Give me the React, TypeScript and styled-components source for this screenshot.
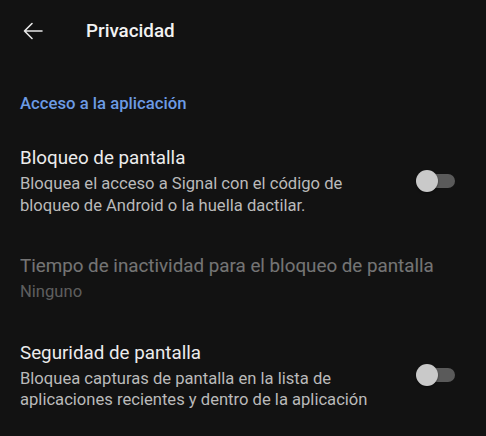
import React, { FunctionComponent } from "react";
import styled, { createGlobalStyle } from "styled-components";

const GlobalStyle = createGlobalStyle`
    body {
        margin: 0;
        background-color: #121212;
        font-family: Roboto, "Noto Sans", sans-serif;
    }
`;

const Screen = styled.div`
    width: 486px;
    height: 436px;
    background-color: #121212;
    overflow: hidden;
`;

const Toolbar = styled.div`
    display: flex;
    align-items: center;
    height: 62px;
    padding-left: 20px;
`;

const BackButton = styled.div`
    width: 26px;
    height: 26px;
    display: flex;
    align-items: center;
    justify-content: center;
    margin-right: 40px;
`;

const Title = styled.h1`
    margin: 0;
    font-size: 18.8px;
    font-weight: 500;
    color: #f2f2f2;
`;

const SectionHeader = styled.div`
    padding: 32px 20px 13px 20px;
    line-height: 20px;
    font-size: 16.7px;
    font-weight: 500;
    color: #6c9be4;
`;

const Row = styled.div<{ $disabled?: boolean }>`
    display: flex;
    align-items: center;
    justify-content: space-between;
    padding: 18px 32px 19px 20px;
    opacity: ${(p) => (p.$disabled ? 0.45 : 1)};
`;

const RowText = styled.div`
    display: flex;
    flex-direction: column;
    gap: 2px;
`;

const RowTitle = styled.div`
    font-size: 18.8px;
    line-height: 26px;
    color: #ececec;
`;

const RowSummary = styled.div`
    font-size: 16.6px;
    line-height: 21.5px;
    color: #bababa;
`;

const Switch = styled.div`
    position: relative;
    width: 36px;
    height: 22px;
    flex-shrink: 0;
`;

const Track = styled.div`
    position: absolute;
    left: 5px;
    top: 4px;
    width: 32px;
    height: 14px;
    border-radius: 7px;
    background-color: #5a5a5a;
`;

const Thumb = styled.div`
    position: absolute;
    left: -2px;
    top: 0;
    width: 22px;
    height: 22px;
    border-radius: 50%;
    background-color: #c9c9c9;
    box-shadow: 0 1px 2px rgba(0, 0, 0, 0.5);
`;

const BackArrow = () => (
    <svg width="24" height="24" viewBox="0 0 24 24" fill="none">
        <path
            d="M21 12H3.5M11 4.5L3.5 12L11 19.5"
            stroke="#e8e8e8"
            strokeWidth="1.6"
            strokeLinecap="round"
            strokeLinejoin="round"
        />
    </svg>
);

const Toggle = () => (
    <Switch>
        <Track />
        <Thumb />
    </Switch>
);

interface SettingProps {
    title: string;
    summary: string;
    toggle?: boolean;
    disabled?: boolean;
}

const Setting: FunctionComponent<SettingProps> = (props) => {
    return (
        <Row $disabled={props.disabled}>
            <RowText>
                <RowTitle>{props.title}</RowTitle>
                <RowSummary>
                    {props.summary.split("\n").map((line, i) => (
                        <div key={i}>{line}</div>
                    ))}
                </RowSummary>
            </RowText>
            {props.toggle && <Toggle />}
        </Row>
    );
};

const App: FunctionComponent = () => {
    return (
        <Screen>
            <GlobalStyle />
            <Toolbar>
                <BackButton>
                    <BackArrow />
                </BackButton>
                <Title>Privacidad</Title>
            </Toolbar>
            <SectionHeader>Acceso a la aplicación</SectionHeader>
            <Setting
                title="Bloqueo de pantalla"
                summary={"Bloquea el acceso a Signal con el código de\nbloqueo de Android o la huella dactilar."}
                toggle
            />
            <Setting
                title="Tiempo de inactividad para el bloqueo de pantalla"
                summary="Ninguno"
                disabled
            />
            <Setting
                title="Seguridad de pantalla"
                summary={"Bloquea capturas de pantalla en la lista de\naplicaciones recientes y dentro de la aplicación"}
                toggle
            />
        </Screen>
    );
};

export default App;
